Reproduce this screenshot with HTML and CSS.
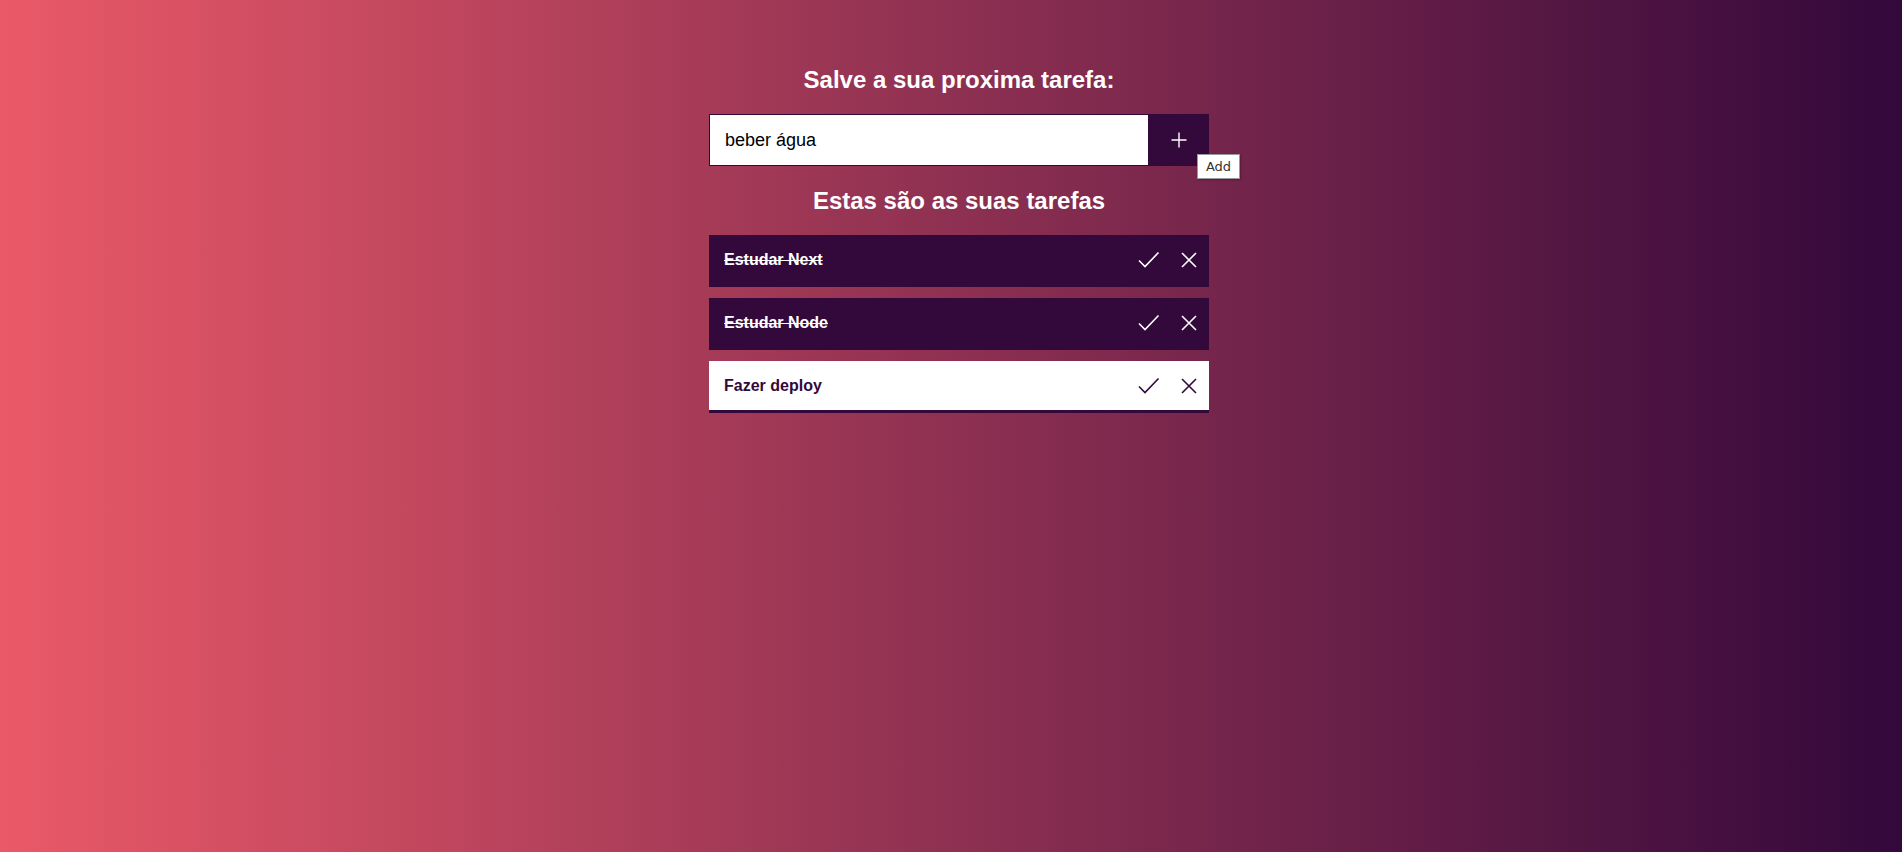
FILE: index.html
```html
<!DOCTYPE html>
<html lang="pt-BR">
<head>
<meta charset="utf-8">
<title>Tarefas</title>
<link rel="stylesheet" href="styles.css">
</head>
<body>
<main class="app">
  <h1 class="title">Salve a sua proxima tarefa:</h1>
  <form class="new-task">
    <input class="new-task__input" type="text" value="beber água">
    <button class="new-task__btn" type="button" title="Add">
      <svg width="16" height="16" viewBox="0 0 16 16"><path d="M8 0.5V15.5M0.5 8H15.5" stroke="#fff" stroke-width="1.4" fill="none"/></svg>
      <span class="tooltip">Add</span>
    </button>
  </form>
  <h2 class="title title--list">Estas são as suas tarefas</h2>
  <ul class="tasks">
    <li class="task task--done">
      <span class="task__text">Estudar Next</span>
      <span class="task__actions">
        <svg class="icon-check" width="22" height="18" viewBox="0 0 22 18"><path d="M1 9.5L7 15.5L20.5 1.5" stroke="currentColor" stroke-width="1.6" fill="none"/></svg>
        <svg class="icon-x" width="16" height="16" viewBox="0 0 16 16"><path d="M1 1L15 15M15 1L1 15" stroke="currentColor" stroke-width="1.6" fill="none"/></svg>
      </span>
    </li>
    <li class="task task--done">
      <span class="task__text">Estudar Node</span>
      <span class="task__actions">
        <svg class="icon-check" width="22" height="18" viewBox="0 0 22 18"><path d="M1 9.5L7 15.5L20.5 1.5" stroke="currentColor" stroke-width="1.6" fill="none"/></svg>
        <svg class="icon-x" width="16" height="16" viewBox="0 0 16 16"><path d="M1 1L15 15M15 1L1 15" stroke="currentColor" stroke-width="1.6" fill="none"/></svg>
      </span>
    </li>
    <li class="task task--open">
      <span class="task__text">Fazer deploy</span>
      <span class="task__actions">
        <svg class="icon-check" width="22" height="18" viewBox="0 0 22 18"><path d="M1 9.5L7 15.5L20.5 1.5" stroke="currentColor" stroke-width="1.6" fill="none"/></svg>
        <svg class="icon-x" width="16" height="16" viewBox="0 0 16 16"><path d="M1 1L15 15M15 1L1 15" stroke="currentColor" stroke-width="1.6" fill="none"/></svg>
      </span>
    </li>
  </ul>
</main>
</body>
</html>
```
FILE: styles.css
```css
* { box-sizing: border-box; }
html, body { height: 100%; }
body {
  margin: 0;
  padding-left: 16px;
  background: linear-gradient(to right, #ea5968, #33083b);
  font-family: "Liberation Sans", Arial, sans-serif;
  color: #fff;
}
.app {
  width: 500px;
  margin: 0 auto;
  padding-top: 66px;
}
.title {
  margin: 0;
  font-size: 24px;
  line-height: 28px;
  font-weight: bold;
  text-align: center;
  color: #fff;
}
.new-task {
  display: flex;
  margin-top: 20px;
  height: 52px;
}
.new-task__input {
  flex: 1;
  height: 52px;
  margin: 0;
  border: 1px solid #33083b;
  padding: 0 15px;
  font-family: "Liberation Sans", Arial, sans-serif;
  font-size: 18px;
  color: #000;
  background: #fff;
  outline: none;
}
.new-task__btn {
  position: relative;
  width: 60px;
  height: 52px;
  border: 0;
  margin: 0;
  padding: 0;
  background: #33083b;
  display: flex;
  align-items: center;
  justify-content: center;
}
.tooltip {
  position: absolute;
  left: 48px;
  top: 40px;
  width: 43px;
  height: 25px;
  background: #fff;
  border: 1px solid #9a9a9a;
  font-family: "DejaVu Sans", sans-serif;
  font-size: 13px;
  line-height: 23px;
  color: #333;
  text-align: center;
  box-shadow: 1px 1px 2px rgba(0,0,0,0.25);
}
.title--list { margin-top: 21px; }
.tasks {
  list-style: none;
  margin: 20px 0 0;
  padding: 0;
  display: flex;
  flex-direction: column;
  gap: 11px;
}
.task {
  display: flex;
  align-items: center;
  justify-content: space-between;
  height: 52px;
  padding: 0 12px 2px 15px;
  font-size: 16px;
  font-weight: bold;
}
.task--done {
  background: #33083b;
  color: #fff;
}
.task--done .task__text { text-decoration: line-through; }
.task--open {
  background: #fff;
  color: #33083b;
  border-bottom: 3px solid #33083b;
  padding-top: 1px;
  padding-bottom: 1px;
}
.task__actions {
  display: flex;
  align-items: center;
  gap: 21px;
}
.icon-check { display: block; }
.icon-x { display: block; }
```
